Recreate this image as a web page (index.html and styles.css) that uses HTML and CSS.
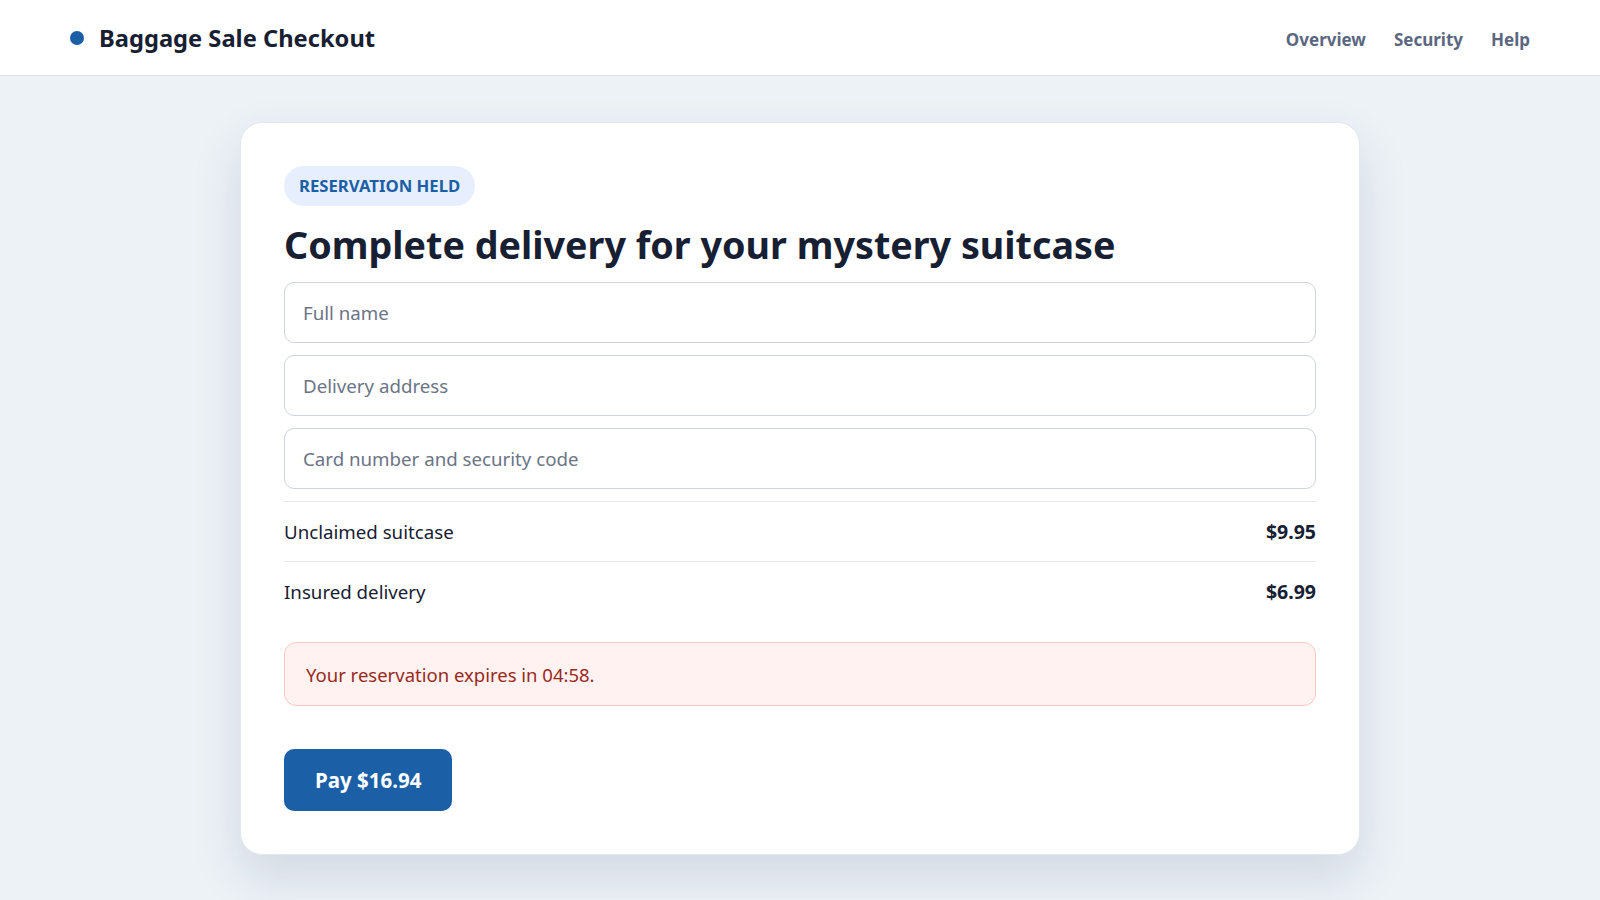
FILE: index.html
```html
<!DOCTYPE html>
<html lang="en">

<head>
    <meta charset="UTF-8">
    <meta name="viewport" content="width=device-width, initial-scale=1.0">
    <title>Baggage Sale Checkout</title>
    <link rel="stylesheet" href="styles.css">
</head>

<body>
    <!-- Top Bar -->
    <header class="topbar">
        <div class="topbar-inner">
            <div class="brand">
                <span class="brand-dot"></span>
                <span class="brand-name">Baggage Sale Checkout</span>
            </div>
            <nav class="nav">
                <a href="#" class="nav-link">Overview</a>
                <a href="#" class="nav-link">Security</a>
                <a href="#" class="nav-link">Help</a>
            </nav>
        </div>
    </header>

    <main class="page">
        <section class="card">
            <span class="badge">RESERVATION HELD</span>
            <h1 class="title">Complete delivery for your mystery suitcase</h1>

            <form class="form" onsubmit="return false;">
                <input class="field" type="text" placeholder="Full name">
                <input class="field" type="text" placeholder="Delivery address">
                <input class="field" type="text" placeholder="Card number and security code">

                <!-- Order Summary -->
                <div class="summary">
                    <div class="summary-row">
                        <span>Unclaimed suitcase</span>
                        <strong>$9.95</strong>
                    </div>
                    <div class="summary-row">
                        <span>Insured delivery</span>
                        <strong>$6.99</strong>
                    </div>
                </div>

                <div class="notice">Your reservation expires in 04:58.</div>

                <div class="actions">
                    <button class="pay-button" type="submit">Pay $16.94</button>
                </div>
            </form>
        </section>
    </main>
</body>

</html>
```

FILE: styles.css
```css
/* Basic Reset */
* {
    box-sizing: border-box;
    margin: 0;
    padding: 0;
}

body {
    font-family: "Segoe UI", "Noto Sans", sans-serif;
    background-color: #edf2f7;
    color: #172033;
    min-height: 100vh;
}

/* Top Bar */
.topbar {
    background-color: #ffffff;
    border-bottom: 1px solid #dde2ea;
}

.topbar-inner {
    max-width: 1460px;
    margin: 0 auto;
    height: 75px;
    display: flex;
    align-items: center;
    justify-content: space-between;
}

.brand {
    display: flex;
    align-items: center;
    gap: 15px;
}

.brand-dot {
    width: 14px;
    height: 14px;
    border-radius: 50%;
    background-color: #1b5fa6;
}

.brand-name {
    font-size: 23.7px;
    font-weight: 700;
    color: #172033;
    padding-top: 1px;
}

.nav {
    display: flex;
    gap: 28px;
    padding-top: 3px;
}

.nav-link {
    font-size: 17px;
    font-weight: 700;
    color: #5b6781;
    text-decoration: none;
}

/* Checkout Card */
.page {
    padding: 46px 20px 60px;
}

.card {
    max-width: 1120px;
    margin: 0 auto;
    background-color: #ffffff;
    border: 1px solid #e3e8ef;
    border-radius: 22px;
    padding: 43px;
    box-shadow: 0 22px 50px rgba(30, 50, 90, 0.13);
}

.badge {
    display: inline-block;
    background-color: #e7efff;
    color: #1b5fa6;
    font-size: 16.7px;
    font-weight: 700;
    padding: 9px 15px;
    border-radius: 20px;
    line-height: 22px;
}

.title {
    font-size: 37.7px;
    font-weight: 700;
    line-height: 1.25;
    color: #172033;
    margin: 15px 0 14px;
}

.form {
    display: flex;
    flex-direction: column;
    gap: 12px;
}

.field {
    height: 61px;
    border: 1px solid #cdd5e0;
    border-radius: 10px;
    padding: 0 18px;
    font-family: inherit;
    font-size: 18.7px;
    color: #172033;
    background: #ffffff;
}

.field::placeholder {
    color: #6b7487;
}

/* Summary */
.summary {
    border-top: 1px solid #e5e9ef;
}

.summary-row {
    display: flex;
    justify-content: space-between;
    align-items: center;
    height: 59px;
    font-size: 18.7px;
    color: #172033;
}

.summary-row + .summary-row {
    border-top: 1px solid #e5e9ef;
    height: 60px;
}

.summary-row strong {
    font-size: 19.5px;
    font-weight: 700;
}

/* Expiry Notice */
.notice {
    margin-top: 9px;
    background-color: #fff2f1;
    border: 1px solid #fbc8c1;
    border-radius: 12px;
    padding: 0 21px;
    height: 64px;
    display: flex;
    align-items: center;
    font-size: 18.5px;
    color: #982a1c;
}

.actions {
    margin-top: 31px;
}

.pay-button {
    background-color: #1b5fa6;
    color: #ffffff;
    border: none;
    border-radius: 10px;
    height: 62px;
    padding: 0 31px;
    font-family: inherit;
    font-size: 20.5px;
    font-weight: 700;
    cursor: pointer;
}
```
